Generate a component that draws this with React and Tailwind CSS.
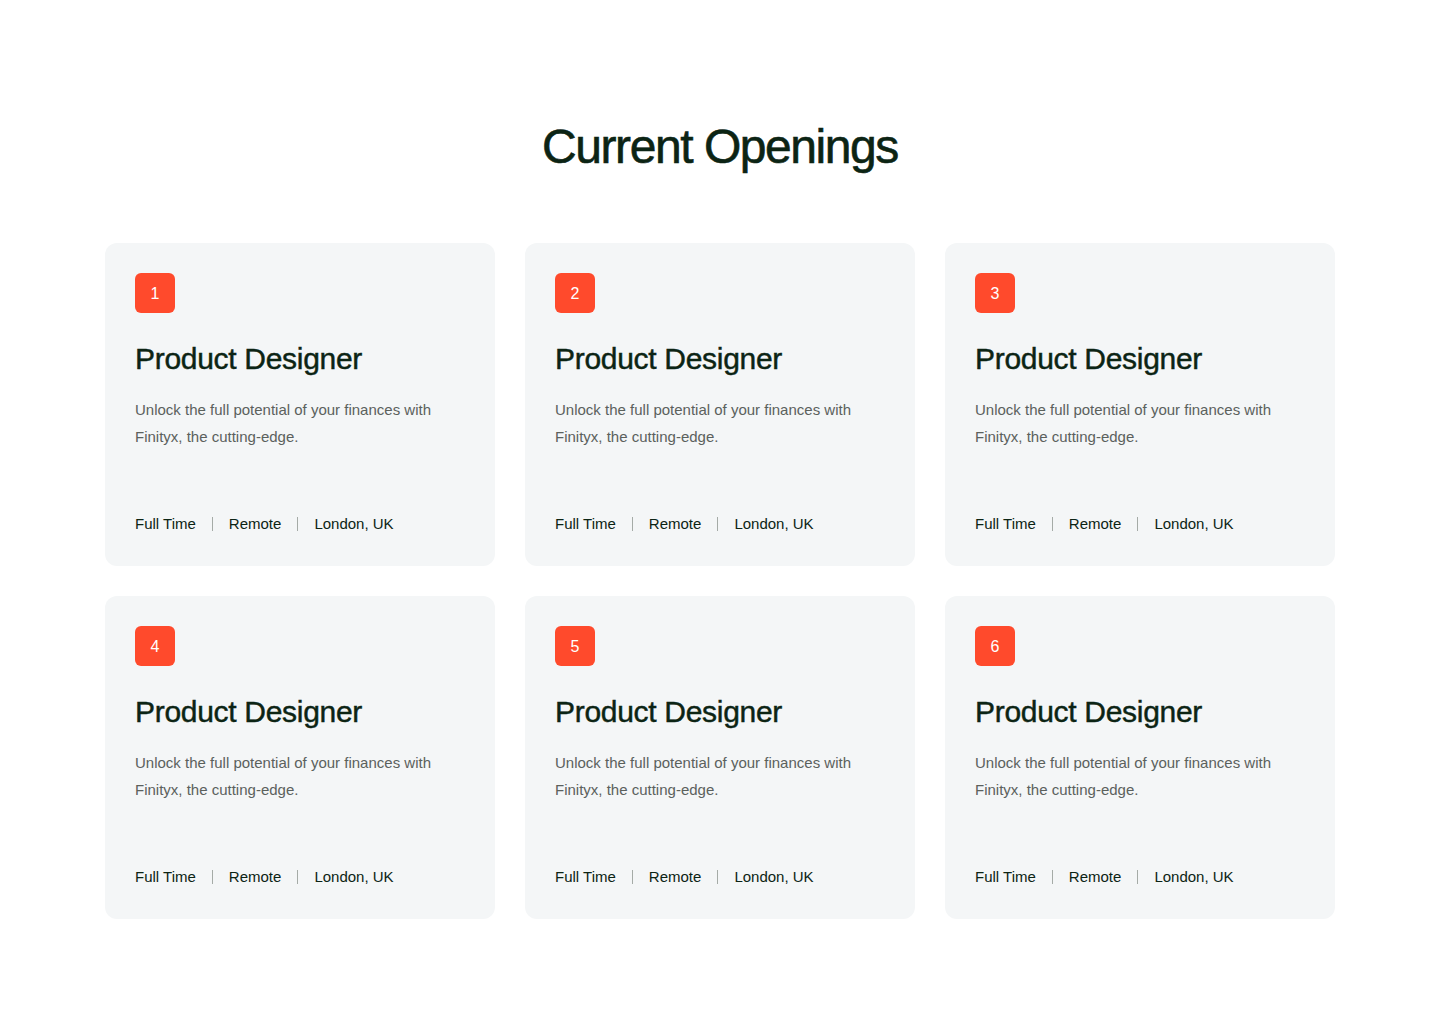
import React from 'react';

const jobs = [1, 2, 3, 4, 5, 6].map((n) => ({
  id: n,
  title: 'Product Designer',
  text: 'Unlock the full potential of your finances with Finityx, the cutting-edge.',
  tags: ['Full Time', 'Remote', 'London, UK'],
}));

const JobCard = ({ job }) => (
  <div className="bg-[#f4f6f7] rounded-xl h-[323px] p-[30px] pb-[31px] flex flex-col">
    <div className="w-10 h-10 rounded-md bg-[#ff4a2c] text-white flex items-center justify-center text-[16px] pt-px">
      {job.id}
    </div>
    <h3 className="mt-[28px] text-[30px] leading-[36px] tracking-[-0.01em] [-webkit-text-stroke:0.45px] text-[#0c2414]">
      {job.title}
    </h3>
    <p className="mt-[19px] text-[15px] leading-[27px] text-[#5b615d] max-w-[310px]">
      {job.text}
    </p>
    <div className="mt-auto flex items-center text-[15px] leading-[22px] text-[#0c2414]">
      {job.tags.map((t, i) => (
        <React.Fragment key={t}>
          {i > 0 && <span className="mx-[16px] w-px h-[14px] bg-[#a5aba7]" />}
          <span>{t}</span>
        </React.Fragment>
      ))}
    </div>
  </div>
);

export default function App() {
  return (
    <div className="min-h-screen bg-white font-['Liberation_Sans',Arial,sans-serif] pt-[118px] pb-[114px]">
      <h2 className="text-center text-[48px] leading-[58px] tracking-[-0.03em] [-webkit-text-stroke:0.6px] text-[#0c2414]">
        Current Openings
      </h2>
      <div className="mt-[67px] mx-auto w-[1230px] grid grid-cols-3 gap-[30px]">
        {jobs.map((job) => (
          <JobCard key={job.id} job={job} />
        ))}
      </div>
    </div>
  );
}
